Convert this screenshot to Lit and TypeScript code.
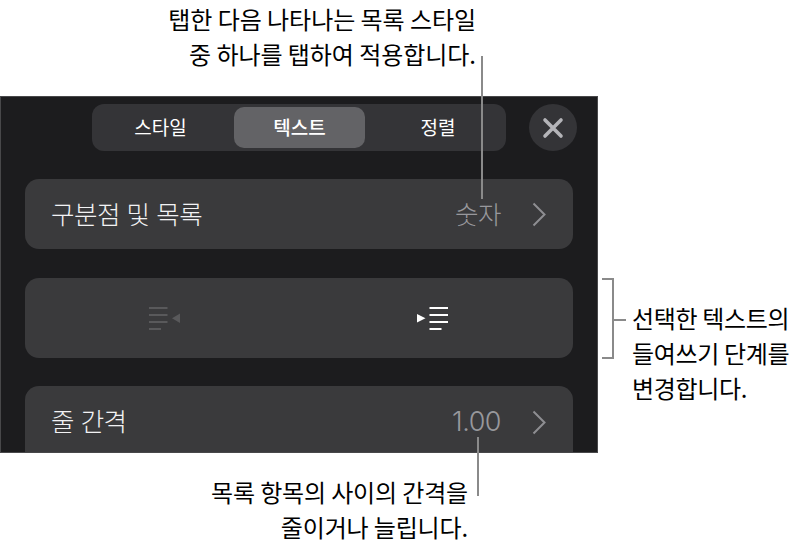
import { LitElement, html, css, svg } from 'lit'
import { customElement } from 'lit/decorators.js'

const chevron = html`<svg class="chevron" width="15" height="25" viewBox="0 0 15 25" fill="none">
  <path d="M1.5 1.5 L12.5 12.5 L1.5 23.5" stroke="#8e8e92" stroke-width="2" />
</svg>`

const indentLines = svg`
  <rect x="0" y="0" width="18.5" height="2" />
  <rect x="0" y="7" width="18.5" height="2" />
  <rect x="0" y="14" width="18.5" height="2" />
  <rect x="0" y="21" width="12" height="2" />
`

@customElement('app-root')
export class AppRoot extends LitElement {
  static styles = css`
    :host {
      display: block;
      position: relative;
      width: 798px;
      height: 545px;
      overflow: hidden;
      background: #fff;
      font-family: Inter, "Noto Sans CJK KR", "Noto Sans", sans-serif;
    }
    .panel {
      box-sizing: border-box;
      width: 598px;
      height: 357px;
      margin-top: 96px;
      padding: 7px 20px 0 24px;
      background: #1c1c1e;
      border: 1px solid #48484a;
      overflow: hidden;
      display: flex;
      flex-direction: column;
    }
    .top {
      display: flex;
      align-items: center;
      gap: 23px;
      margin-left: 67px;
    }
    .segments {
      width: 415px;
      height: 47px;
      box-sizing: border-box;
      padding: 3px;
      border-radius: 12px;
      background: #343437;
      display: grid;
      grid-template-columns: 139px 131px 1fr;
      color: #fff;
      font-size: 19px;
      font-weight: 400;
    }
    .segment {
      display: flex;
      align-items: center;
      justify-content: center;
      border-radius: 10px;
      padding-bottom: 3px;
    }
    .segment:first-child {
      padding-right: 8px;
    }
    .segment:last-child {
      padding-left: 8px;
    }
    .segment.on {
      background: #636366;
      font-weight: 500;
    }
    .close {
      width: 48px;
      height: 47px;
      border-radius: 50%;
      background: #343437;
      display: flex;
      align-items: center;
      justify-content: center;
    }
    .row {
      box-sizing: border-box;
      width: 548px;
      flex: none;
      margin-top: 28px;
      height: 70px;
      padding: 0 26px;
      border-radius: 14px;
      background: #3a3a3c;
      display: flex;
      align-items: center;
      justify-content: space-between;
      color: #f2f2f4;
      font-size: 25.5px;
      font-weight: 300;
      letter-spacing: -0.5px;
    }
    .row.indent {
      height: 80px;
      padding: 0 7px 0 5px;
      margin-top: 29px;
      display: grid;
      grid-template-columns: 1fr 1fr;
      justify-items: center;
    }
    .row.last {
      height: 90px;
      margin-top: 28px;
      padding-bottom: 18px;
    }
    .label {
      line-height: 25px;
    }
    .row.last .label {
      padding-bottom: 2px;
    }
    .number {
      font-size: 27px;
      line-height: 25px;
      padding-bottom: 2px;
    }
    .value {
      display: flex;
      align-items: center;
      gap: 31px;
      color: #98989c;
    }
    .callout {
      position: absolute;
      margin: 0;
      color: #000;
      font-family: "Noto Sans CJK KR", "Noto Sans", sans-serif;
      font-size: 24px;
      font-weight: 400;
      line-height: 35px;
      letter-spacing: -0.15px;
      white-space: nowrap;
    }
    .callout.right {
      text-align: right;
    }
    .tab-note {
      right: 322px;
      top: 1px;
      letter-spacing: -0.05px;
    }
    .indent-note {
      left: 632px;
      top: 300px;
      letter-spacing: -0.35px;
    }
    .spacing-note {
      right: 330px;
      top: 474px;
    }
    .leader {
      position: absolute;
      background: #8a8a8a;
    }
    .bracket {
      position: absolute;
      left: 602px;
      top: 278px;
      width: 12px;
      height: 81px;
      border: solid #8a8a8a;
      border-width: 2px 2px 2px 0;
      box-sizing: border-box;
    }
  `

  render() {
    return html`
      <div class="panel">
        <div class="top">
          <div class="segments">
            <div class="segment">스타일</div>
            <div class="segment on">텍스트</div>
            <div class="segment">정렬</div>
          </div>
          <div class="close">
            <svg width="22" height="22" viewBox="0 0 22 22" fill="none">
              <path d="M3 3 L19 19 M19 3 L3 19" stroke="#b4b4b8" stroke-width="3.6" stroke-linecap="round" />
            </svg>
          </div>
        </div>
        <div class="row">
          <span class="label">구분점 및 목록</span>
          <span class="value"><span class="label">숫자</span>${chevron}</span>
        </div>
        <div class="row indent">
          <svg width="31" height="23" viewBox="0 0 31 23" fill="#59595b">
            ${indentLines}
            <path d="M31 6.5 V16 L23 11.3 Z" />
          </svg>
          <svg width="31" height="23" viewBox="0 0 31 23" fill="#fff">
            <g transform="translate(12.5 0)">${indentLines}</g>
            <path d="M0 7 V15.5 L8.5 11.3 Z" />
          </svg>
        </div>
        <div class="row last">
          <span class="label">줄 간격</span>
          <span class="value"><span class="number">1.00</span>${chevron}</span>
        </div>
      </div>

      <p class="callout right tab-note">탭한 다음 나타나는 목록 스타일<br />중 하나를 탭하여 적용합니다.</p>
      <p class="callout indent-note">선택한 텍스트의<br />들여쓰기 단계를<br />변경합니다.</p>
      <p class="callout right spacing-note">목록 항목의 사이의 간격을<br />줄이거나 늘립니다.</p>

      <div class="leader" style="left:481px;top:56px;width:2px;height:143px"></div>
      <div class="leader" style="left:477px;top:437px;width:2px;height:59px"></div>
      <div class="bracket"></div>
      <div class="leader" style="left:614px;top:319px;width:12px;height:2px"></div>
    `
  }
}
